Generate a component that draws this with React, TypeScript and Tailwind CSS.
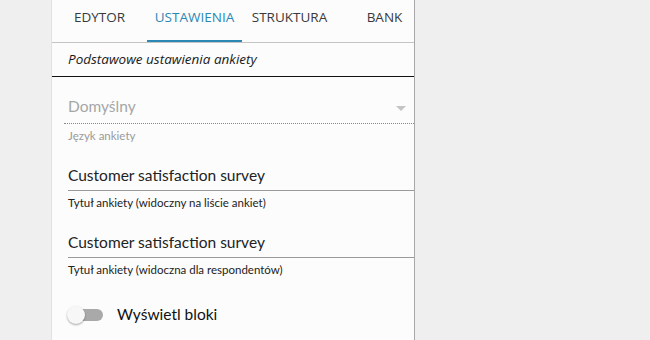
import React from "react";

export default function App() {
  const tabs = ["EDYTOR", "USTAWIENIA", "STRUKTURA", "BANK"];
  return (
    <div className="w-[650px] h-[340px] bg-[#efefef] flex overflow-hidden" style={{ fontFamily: "Lato, 'Noto Sans', sans-serif" }}>
      <div className="w-[51px] shrink-0" />
      <div className="w-[364px] h-full bg-[#fcfcfc] border-r border-[#a8a8a8] border-l border-l-[#e2e2e2] flex flex-col overflow-hidden">
        <div className="h-[43px] shrink-0 flex border-b border-[#c4c4c4] overflow-hidden">
          {tabs.map((t, i) => (
            <div
              key={t}
              className={
                i === 1
                  ? "w-[95px] shrink-0 h-full flex justify-center pt-[7px] border-b-2 border-[#2b88b5] text-[#2b88b5] text-[13.5px]"
                  : "w-[95px] shrink-0 h-full flex justify-center pt-[7px] text-[#3a3a3a] text-[13.5px]"
              }
              style={{ fontFamily: "'Open Sans', sans-serif" }}
            >
              {t}
            </div>
          ))}
        </div>
        <div className="h-[34px] shrink-0 border-b border-[#111] flex items-center pl-[16px]">
          <span className="italic text-[13.5px] text-[#1a1a1a]" style={{ fontFamily: "'Open Sans', sans-serif" }}>
            Podstawowe ustawienia ankiety
          </span>
        </div>
        <div className="pl-[12px] pt-[17px]">
          <div className="h-[30px] border-b border-dotted border-[#888] flex items-center justify-between pl-[4px] pr-[8px] pb-[4px]">
            <span className="text-[15.5px] text-[#a6a6a6]">Domyślny</span>
            <svg width="10" height="6" viewBox="0 0 10 6" className="mt-[4px]">
              <path d="M0 0 L10 0 L5 5 Z" fill="#c4c4c4" />
            </svg>
          </div>
          <div className="pl-[4px] pt-[3px] text-[11.5px] text-[#9a9a9a] h-[22px]">Język ankiety</div>
        </div>
        <div className="pl-[16px] pt-[18px]">
          <div className="h-[27px] border-b border-[#9a9a9a] flex items-center pb-[2px]">
            <span className="text-[15.5px] text-[#222]">Customer satisfaction survey</span>
          </div>
          <div className="pt-[3px] text-[11.5px] text-[#222] h-[25px]">Tytuł ankiety (widoczny na liście ankiet)</div>
        </div>
        <div className="pl-[16px] pt-[14px]">
          <div className="h-[28px] border-b border-[#9a9a9a] flex items-center pb-[2px]">
            <span className="text-[15.5px] text-[#222]">Customer satisfaction survey</span>
          </div>
          <div className="pt-[3px] text-[11.5px] text-[#222]">Tytuł ankiety (widoczna dla respondentów)</div>
        </div>
        <div className="pl-[15px] pt-[25px] flex items-center gap-[13px]">
          <div className="relative w-[37px] h-[18px] flex items-center">
            <div className="absolute left-[10px] w-[26px] h-[12px] rounded-full bg-[#a9a9a9]" />
            <div className="absolute left-0 w-[18px] h-[18px] rounded-full bg-[#f7f7f7] shadow-[0_1px_2px_rgba(0,0,0,0.35)]" />
          </div>
          <span className="text-[15.5px] text-[#111]">Wyświetl bloki</span>
        </div>
      </div>
      <div className="flex-1" />
    </div>
  );
}
